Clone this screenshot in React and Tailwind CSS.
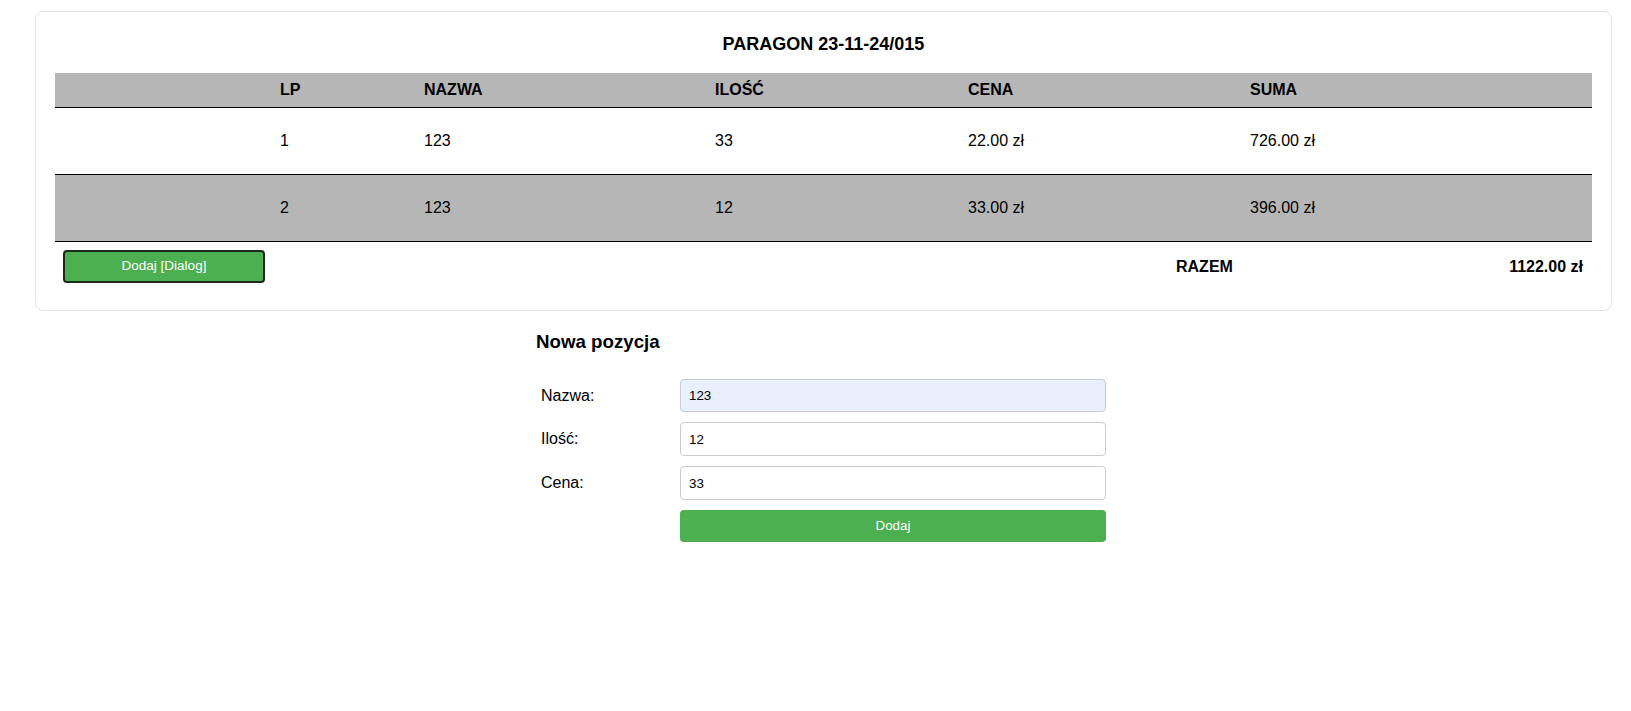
import React, { useState } from 'react';

const COLS = 'grid grid-cols-[225px_144px_291px_253px_282px_1fr] items-center';

const App = () => {
    const [items, setItems] = useState([
        { name: '123', qty: 33, price: 22 },
        { name: '123', qty: 12, price: 33 },
    ]);
    const [form, setForm] = useState({ name: '123', qty: '12', price: '33' });

    const total = items.reduce((s, i) => s + i.qty * i.price, 0);

    const handleAdd = (e) => {
        e.preventDefault();
        setItems([...items, { name: form.name, qty: Number(form.qty), price: Number(form.price) }]);
    };

    return (
        <div className="min-h-screen bg-white text-black font-['Liberation_Sans',Arial,sans-serif]">
            <div className="pt-[11px] pl-[35px] pr-[19px]">
                {/* receipt card */}
                <div className="border border-[#e3e3e3] rounded-[8px] px-[19px] pt-[21px] pb-[19px]">
                    <h2 className="text-center text-[18px] leading-[22px] font-bold mb-[18px]">PARAGON 23-11-24/015</h2>

                    <div className={`${COLS} h-[35px] bg-[#b6b6b6] border-b border-black text-[16px] font-bold`}>
                        <div />
                        <div>LP</div>
                        <div>NAZWA</div>
                        <div>ILOŚĆ</div>
                        <div>CENA</div>
                        <div>SUMA</div>
                    </div>

                    {items.map((item, idx) => (
                        <div
                            key={idx}
                            className={`${COLS} h-[67px] border-b border-black text-[16px] ${idx % 2 === 1 ? 'bg-[#b6b6b6]' : 'bg-white'}`}
                        >
                            <div />
                            <div>{idx + 1}</div>
                            <div>{item.name}</div>
                            <div>{item.qty}</div>
                            <div>{item.price.toFixed(2)} zł</div>
                            <div>{(item.qty * item.price).toFixed(2)} zł</div>
                        </div>
                    ))}

                    <div className="flex items-center pt-[8px] pb-[8px]">
                        <button className="ml-[8px] w-[202px] h-[33px] bg-[#4caf50] border-2 border-[#1b2a1b] rounded-[4px] text-white text-[13.5px]">
                            Dodaj [Dialog]
                        </button>
                        <div className="ml-[911px] text-[16px] font-bold">RAZEM</div>
                        <div className="flex-1 text-right pr-[9px] text-[16px] font-bold">{total.toFixed(2)} zł</div>
                    </div>
                </div>

                {/* new item form */}
                <form onSubmit={handleAdd} className="w-[570px] ml-[501px] mt-[20px]">
                    <h3 className="text-[18.72px] leading-[22px] font-bold mb-[26px]">Nowa pozycja</h3>
                    <div className="flex flex-col gap-[10px]">
                        <div className="flex items-center">
                            <label className="w-[144px] pl-[5px] text-[16px]">Nazwa:</label>
                            <input
                                value={form.name}
                                onChange={(e) => setForm({ ...form, name: e.target.value })}
                                className="flex-1 h-[33px] px-[8px] border border-[#cccccc] rounded-[4px] bg-[#e8f0fe] text-[13.33px] outline-none"
                            />
                        </div>
                        <div className="flex items-center">
                            <label className="w-[144px] pl-[5px] text-[16px]">Ilość:</label>
                            <input
                                value={form.qty}
                                onChange={(e) => setForm({ ...form, qty: e.target.value })}
                                className="flex-1 h-[34px] px-[8px] border border-[#cccccc] rounded-[4px] bg-white text-[13.33px] outline-none"
                            />
                        </div>
                        <div className="flex items-center">
                            <label className="w-[144px] pl-[5px] text-[16px]">Cena:</label>
                            <input
                                value={form.price}
                                onChange={(e) => setForm({ ...form, price: e.target.value })}
                                className="flex-1 h-[34px] px-[8px] border border-[#cccccc] rounded-[4px] bg-white text-[13.33px] outline-none"
                            />
                        </div>
                        <div className="flex items-center">
                            <div className="w-[144px]" />
                            <button type="submit" className="flex-1 h-[32px] bg-[#4caf50] rounded-[4px] text-white text-[13.33px]">
                                Dodaj
                            </button>
                        </div>
                    </div>
                </form>
            </div>
        </div>
    );
};

export default App;
